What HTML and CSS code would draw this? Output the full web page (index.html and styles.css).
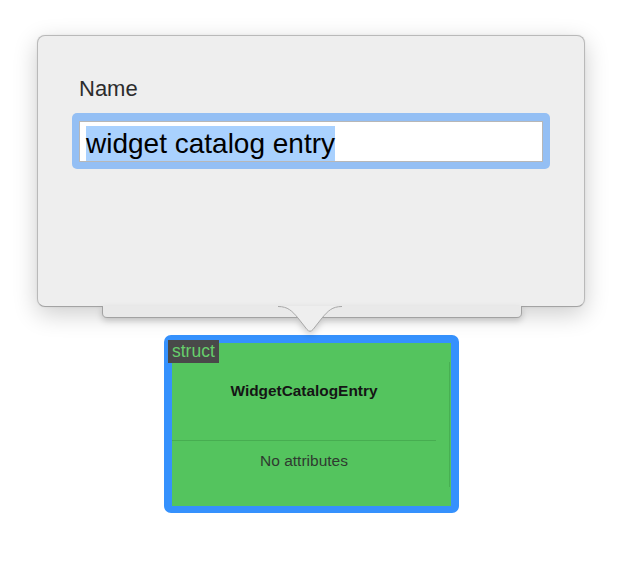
FILE: index.html
```html
<!DOCTYPE html>
<html>
<head>
<meta charset="utf-8">
<link rel="stylesheet" href="styles.css">
</head>
<body>
<div class="page">
  <div class="popover">
    <div class="field-label">Name</div>
    <div class="focus-ring">
      <div class="text-box"><span class="selected">widget catalog entry</span></div>
    </div>
    <svg class="tail" width="420" height="32" viewBox="0 0 420 32">
      <path class="bar" d="M0.5,0 V7 Q0.5,11.5 5,11.5 H415 Q419.5,11.5 419.5,7 V0"/>
      <path class="arrow-fill" d="M176,0 L176,0.5 C186,0.5 190,5 196,12 L205,23.5 Q208,27 211,23.5 L220,12 C226,5 230,0.5 240,0.5 L240,0 Z"/>
      <path class="arrow-line" d="M176,0.5 C186,0.5 190,5 196,12 L205,23.5 Q208,27 211,23.5 L220,12 C226,5 230,0.5 240,0.5"/>
    </svg>
  </div>
  <div class="node">
    <span class="kind">struct</span>
    <div class="node-body">
      <div class="node-content">
        <div class="node-title">WidgetCatalogEntry</div>
        <div class="node-sep"></div>
        <div class="node-attrs">No attributes</div>
      </div>
      <div class="scroll-line"></div>
    </div>
  </div>
</div>
</body>
</html>
```
FILE: styles.css
```css
html, body {
  margin: 0;
  padding: 0;
  background: #ffffff;
}
body {
  width: 634px;
  height: 570px;
  overflow: hidden;
  font-family: "Liberation Sans", Arial, sans-serif;
}
.page {
  display: flex;
  flex-direction: column;
  align-items: flex-start;
}
.popover {
  position: relative;
  z-index: 2;
  box-sizing: border-box;
  margin: 35px 0 0 37px;
  width: 548px;
  height: 272px;
  padding: 41px 34px 0 41px;
  background: #eeeeee;
  border: 1px solid #b9b9b9;
  border-bottom-color: #a3a3a3;
  border-radius: 8px;
  box-shadow: 0 7px 24px rgba(0, 0, 0, 0.20), 0 0 2px rgba(0, 0, 0, 0.08);
}
.field-label {
  font-size: 22px;
  line-height: 24px;
  color: #2c2c2c;
}
.focus-ring {
  margin: 12px 0 0 -7px;
  width: 478px;
  box-sizing: border-box;
  padding: 8px 7px 7px 7px;
  background: #94bff4;
  border-radius: 5px;
}
.text-box {
  box-sizing: border-box;
  height: 41px;
  padding: 4px 6px 1px 6px;
  background: #ffffff;
  border: 1px solid #b7b7b7;
}
.selected {
  display: inline-block;
  font-size: 28px;
  line-height: 35px;
  color: #000000;
  background: #a9d1fe;
}
.tail {
  position: absolute;
  left: 64px;
  top: 270px;
  overflow: visible;
  filter: drop-shadow(0 3px 3px rgba(0, 0, 0, 0.18));
}
.bar {
  fill: #e9e9e9;
  stroke: #a2a2a2;
  stroke-width: 1;
}
.arrow-fill {
  fill: #eeeeee;
}
.arrow-line {
  fill: none;
  stroke: #a7a7a7;
  stroke-width: 1;
}
.node {
  position: relative;
  z-index: 1;
  margin: 28px 0 0 164px;
  width: 295px;
  height: 178px;
  box-sizing: border-box;
  border: 8px solid #3591fd;
  border-bottom-width: 7px;
  border-radius: 7px;
  background: #54c45e;
}
.kind {
  position: absolute;
  top: -3px;
  left: -4px;
  height: 23px;
  padding: 0 4px 0 4px;
  background: #494949;
  color: #67cf6c;
  font-size: 17.5px;
  line-height: 23px;
}
.node-body {
  display: flex;
  height: 100%;
}
.node-content {
  width: 264px;
  padding-top: 39px;
  text-align: center;
}
.node-title {
  font-size: 15.4px;
  font-weight: bold;
  line-height: 18px;
  color: #151515;
}
.node-sep {
  margin-top: 40px;
  height: 1px;
  background: #47ad51;
}
.node-attrs {
  margin-top: 11px;
  font-size: 15.5px;
  line-height: 18px;
  color: #2f3a30;
}
.scroll-line {
  width: 1px;
  margin: 19px 0 19px 13px;
  background: #48b052;
}
```
